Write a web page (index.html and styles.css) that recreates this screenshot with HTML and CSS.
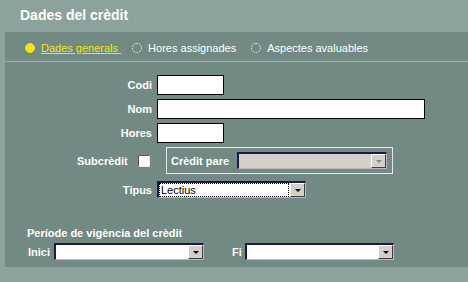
FILE: index.html
```html
<!DOCTYPE html>
<html lang="ca">
<head>
<meta charset="utf-8">
<title>Dades del crèdit</title>
<link rel="stylesheet" href="styles.css">
</head>
<body>
<div class="title">Dades del crèdit</div>
<div class="panel">
  <div class="tabs">
    <div class="tab active"><span class="radio on"></span><span class="tab-label">Dades generals&nbsp;</span></div>
    <div class="tab second"><span class="radio"></span><span class="tab-label">Hores assignades</span></div>
    <div class="tab"><span class="radio"></span><span class="tab-label">Aspectes avaluables</span></div>
  </div>
  <div class="sep"></div>
  <div class="form">
    <div class="row"><label class="lbl">Codi</label><input class="txt short" type="text"></div>
    <div class="row"><label class="lbl">Nom</label><input class="txt long" type="text"></div>
    <div class="row"><label class="lbl">Hores</label><input class="txt short" type="text"></div>
    <div class="subrow">
      <span class="lbl-inline sub-lbl">Subcrèdit</span>
      <span class="check"></span>
      <div class="group">
        <span class="lbl-inline pare-lbl">Crèdit pare</span>
        <div class="combo disabled w150"><span class="combo-text"></span><span class="combo-btn"><span class="arrow"></span></span></div>
      </div>
    </div>
    <div class="row tipus"><label class="lbl">Tipus</label>
      <div class="combo w149"><span class="combo-text focus">Lectius</span><span class="combo-btn"><span class="arrow"></span></span></div>
    </div>
    <div class="period-title">Període de vigència del crèdit</div>
    <div class="period-row">
      <span class="lbl-inline inici-lbl">Inici</span>
      <div class="combo w150"><span class="combo-text"></span><span class="combo-btn"><span class="arrow"></span></span></div>
      <span class="lbl-inline fi-lbl">Fi</span>
      <div class="combo w149"><span class="combo-text"></span><span class="combo-btn"><span class="arrow"></span></span></div>
    </div>
  </div>
</div>
</body>
</html>
```
FILE: styles.css
```css
* { box-sizing: border-box; }
html, body { margin: 0; padding: 0; }
body {
  width: 468px;
  height: 282px;
  background: #8ba39c;
  font-family: "Liberation Sans", Arial, sans-serif;
  font-size: 11px;
  color: #fff;
  overflow: hidden;
}
.title {
  height: 32px;
  line-height: 31px;
  padding-left: 20px;
  font-weight: bold;
  font-size: 14px;
  color: #fff;
}
.panel {
  margin-left: 5px;
  height: 235px;
  background: #728a83;
}
.tabs {
  height: 29px;
  display: flex;
  align-items: center;
  padding-left: 20px;
  padding-top: 2px;
}
.tab {
  display: flex;
  align-items: center;
  gap: 6px;
  margin-right: 11px;
}
.tab.second { margin-right: 15px; }
.tab-label { color: #fff; }
.tab.active .tab-label {
  color: #f2e41a;
  text-decoration: underline;
}
.radio {
  width: 10px;
  height: 10px;
  border-radius: 50%;
  border: 1px dotted #fff;
}
.radio.on {
  background: #f2e41a;
  border: 1px solid #f2e41a;
}
.sep {
  height: 1px;
  background: #9fb3ac;
}
.form { padding-top: 13px; }
.row {
  display: flex;
  align-items: center;
  height: 20px;
  margin-bottom: 4px;
}
.lbl {
  width: 147px;
  text-align: right;
  font-weight: bold;
  margin-right: 5px;
}
.lbl-inline { font-weight: bold; white-space: nowrap; }
.sub-lbl { width: 52px; }
.pare-lbl { width: 61px; }
.inici-lbl { width: 21px; margin-right: 5px; }
.fi-lbl { width: 13px; margin-left: 28px; }
.txt {
  height: 20px;
  border: 1px solid #000;
  background: #fff;
  padding: 0 2px;
  margin: 0;
  font: 11px "Liberation Sans", Arial, sans-serif;
}
.txt.short { width: 67px; }
.txt.long { width: 268px; }
.subrow {
  display: flex;
  align-items: center;
  padding-left: 72px;
  margin-top: 2px;
}
.check {
  width: 12px;
  height: 12px;
  margin-left: 9px;
  margin-top: 1px;
  background: #fff;
  border-style: solid;
  border-width: 1px;
  border-color: #5a5a5a #e8e8e8 #e8e8e8 #5a5a5a;
}
.group {
  margin-left: 16px;
  display: flex;
  align-items: center;
  height: 27px;
  border: 1px solid #e6ece9;
  padding: 0 5px 0 4px;
}
.group .combo { margin-left: 5px; }
.combo {
  display: flex;
  height: 17px;
  background: #fff;
  border-style: solid;
  border-width: 2px 1px 1px 2px;
  border-color: #1b1b4a #b9b7c9 #b9b7c9 #1b1b4a;
}
.combo.disabled { background: #d4d0c8; }
.w150 { width: 150px; }
.w149 { width: 149px; }
.combo-text {
  flex: 1;
  color: #000;
  font-size: 11px;
  line-height: 12px;
  padding-left: 2px;
}
.combo-text.focus {
  outline: 1px dotted #000;
  outline-offset: -1px;
  margin: 0 1px 0 0;
  padding-top: 1px;
}
.combo-btn {
  width: 15px;
  height: 14px;
  background: #d4d0c8;
  border-style: solid;
  border-width: 1px;
  border-color: #fff #404040 #404040 #fff;
  display: flex;
  align-items: center;
  justify-content: center;
}
.arrow {
  width: 0;
  height: 0;
  border-left: 3px solid transparent;
  border-right: 3px solid transparent;
  border-top: 3px solid #000;
  margin-top: 1px;
}
.combo.disabled .arrow { border-top-color: #888; }
.tipus { height: 17px; margin-top: 7px; }
.period-title {
  margin-top: 29px;
  padding-left: 22px;
  font-weight: bold;
  line-height: 13px;
}
.period-row {
  display: flex;
  align-items: center;
  padding-left: 23px;
  margin-top: 3px;
}
```
